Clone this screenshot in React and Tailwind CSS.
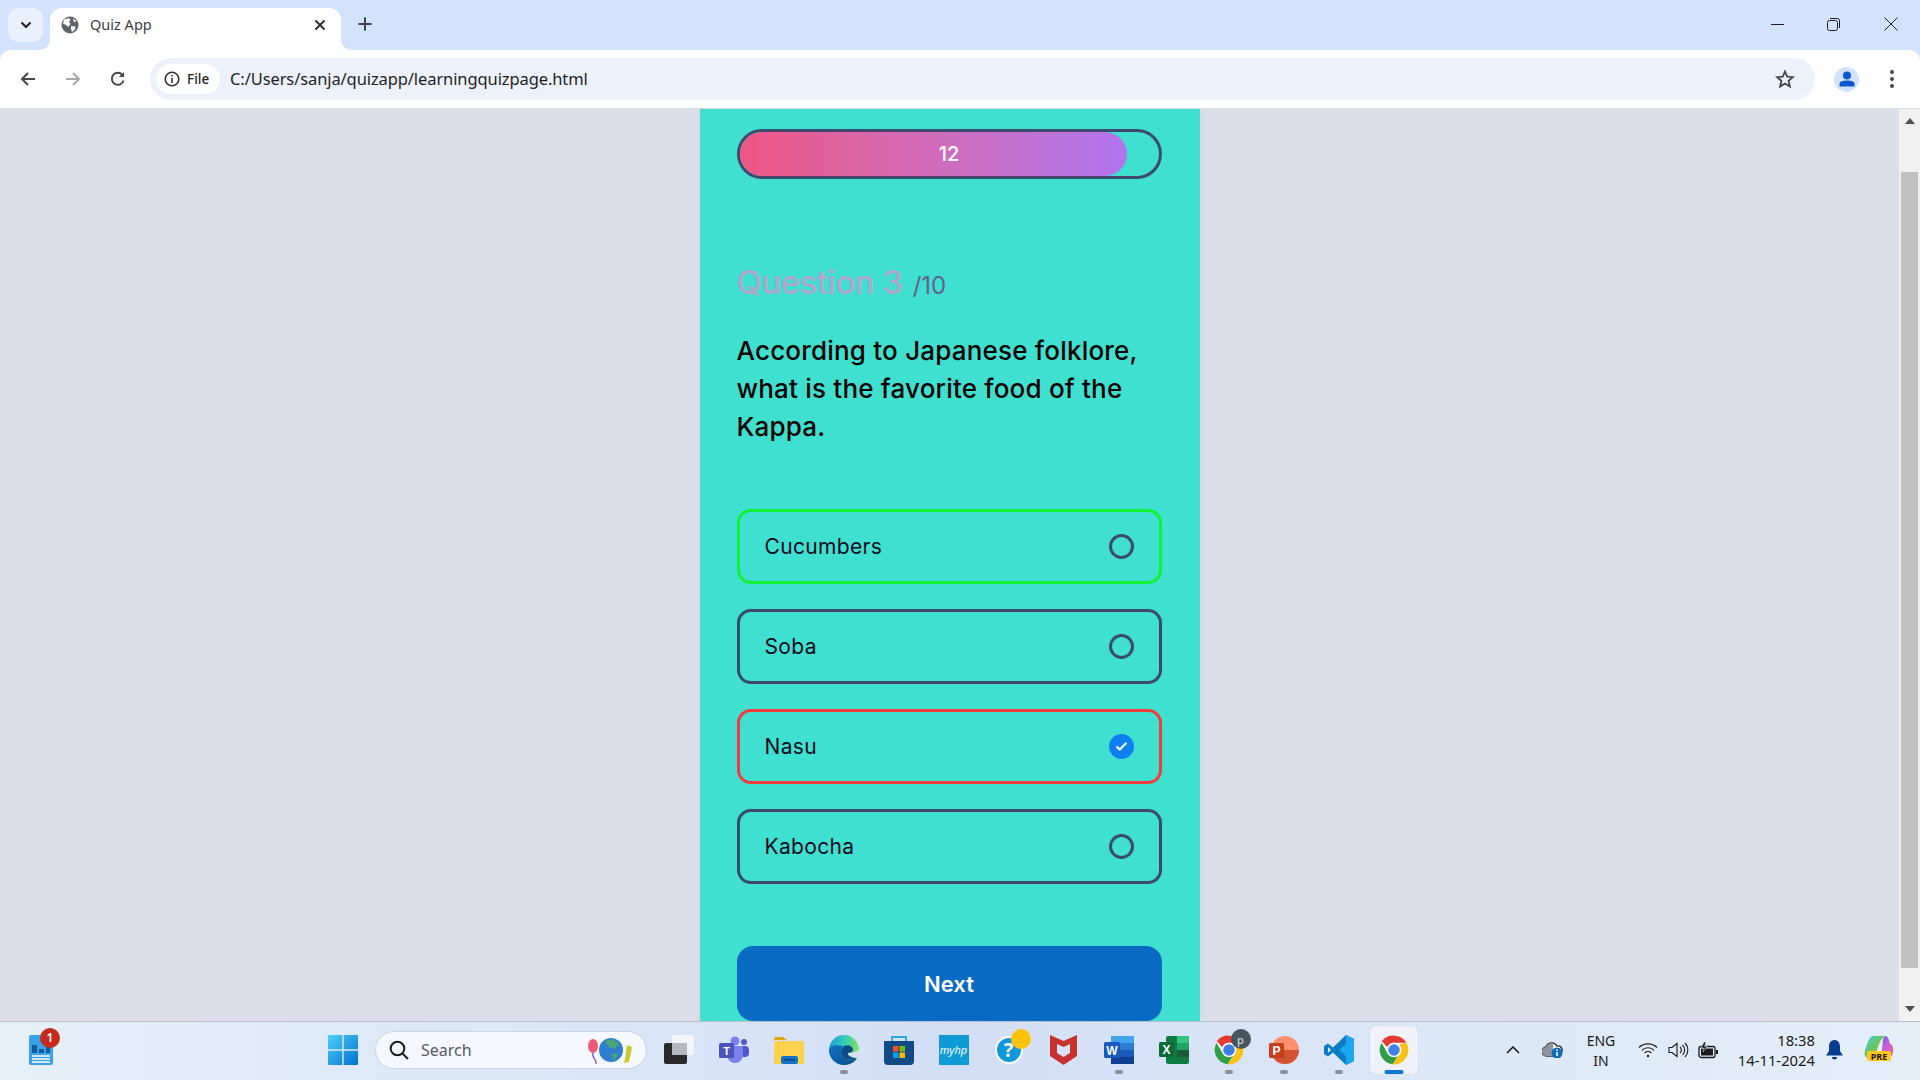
import React from "react";

const ui = "font-['Noto_Sans','Open_Sans',sans-serif]";
const quiz = "font-['Inter','Lato',sans-serif]";

function Globe() {
  return (
    <svg width="18" height="18" viewBox="0 0 18 18">
      <circle cx="9" cy="9" r="8.5" fill="#5f6368" />
      <path d="M3 3.5 L8 2 L9.5 4 L8 6 L9.5 8 L7 11 L5 9 L2 7.5Z M10 10 L14.5 10.5 L14 13.5 L11 16 L10 13Z M12 2.5 L15.5 5 L13 6.5Z" fill="#fff" />
    </svg>
  );
}

function ChromeLogo({ size = 30 }) {
  return (
    <svg width={size} height={size} viewBox="0 0 48 48">
      <circle cx="24" cy="24" r="23" fill="#fff" />
      <path d="M24 1a23 23 0 0 1 19.9 11.5H24a11.5 11.5 0 0 0-10.7 7.2L4.6 9.8A23 23 0 0 1 24 1z" fill="#e33b2e" />
      <path d="M4.1 12.4 A23 23 0 0 0 22 46.9 L31 32.5 A11.5 11.5 0 0 1 14 30 Z" fill="#2f9e47" />
      <path d="M43.9 12.5 A23 23 0 0 1 22 46.9 L32.5 31 A11.5 11.5 0 0 0 32 15 L43.9 12.5Z" fill="#fbc116" />
      <circle cx="24" cy="24" r="11.5" fill="#fff" />
      <circle cx="24" cy="24" r="9.2" fill="#3f7fe8" />
    </svg>
  );
}

function Dot() {
  return <span className="absolute left-1/2 top-[48px] h-[4px] w-[8px] -translate-x-1/2 rounded-full bg-[#8a8f9c]" />;
}

function TaskIcon({ children, dot, active }) {
  return (
    <div className="relative flex h-[56px] w-[55px] items-center justify-center">
      {active && <span className="absolute left-[3.5px] top-[4px] h-[48px] w-[48px] rounded-[5px] bg-[#eff2fa] shadow-[0_0_1px_rgba(0,0,0,0.25)]" />}
      <span className="relative flex items-center justify-center">{children}</span>
      {dot && <Dot />}
      {active && <span className="absolute left-1/2 top-[48px] h-[4px] w-[19px] -translate-x-1/2 rounded-full bg-[#0078d4]" />}
    </div>
  );
}

function Radio({ checked }) {
  if (checked) {
    return (
      <span className="flex h-[25px] w-[25px] items-center justify-center rounded-full bg-[#0d7ff0]">
        <svg width="13" height="11" viewBox="0 0 13 11" fill="none" stroke="#fff" strokeWidth="2.2">
          <path d="M1.5 5.5 L4.8 8.5 L11.5 1.8" />
        </svg>
      </span>
    );
  }
  return <span className="h-[25px] w-[25px] rounded-full border-[3px] border-[#3c4a6d]" />;
}

function Option({ label, border, checked }) {
  return (
    <div className={`flex h-[75px] items-center justify-between rounded-[14px] border-[3px] px-[25px] ${border}`}>
      <span className="text-[21px] leading-[30px] tracking-[0.35px] text-[#050a20]">{label}</span>
      <Radio checked={checked} />
    </div>
  );
}

function Chrome() {
  return (
    <div className={`${ui} shrink-0 bg-[#d3e3fd]`}>
      <div className="flex h-[50px] items-end">
        <div className="mb-[8px] ml-[8px] flex h-[34px] w-[35px] items-center justify-center rounded-[10px] bg-[#e9f1fe]">
          <svg width="12" height="8" viewBox="0 0 12 8" fill="none" stroke="#1f1f1f" strokeWidth="2"><path d="M1.5 1.5 L6 6 L10.5 1.5" /></svg>
        </div>
        <div className="relative ml-[7px] flex h-[42px] w-[291px] items-center rounded-t-[12px] bg-white pb-[8px] pl-[11px] pr-[15px]">
          <Globe />
          <span className="ml-[11px] flex-1 text-[14.5px] text-[#3c4043]">Quiz App</span>
          <svg width="12" height="12" viewBox="0 0 12 12" stroke="#303134" strokeWidth="2"><path d="M1.5 1.5 L10.5 10.5 M10.5 1.5 L1.5 10.5" /></svg>
          <svg className="absolute -left-[10px] bottom-0" width="10" height="10" viewBox="0 0 10 10"><path d="M10 0 V10 H0 A10 10 0 0 0 10 0Z" fill="#fff" /></svg>
          <svg className="absolute -right-[10px] bottom-0" width="10" height="10" viewBox="0 0 10 10"><path d="M0 0 V10 H10 A10 10 0 0 1 0 0Z" fill="#fff" /></svg>
        </div>
        <svg className="mb-[19px] ml-[17px]" width="14" height="14" viewBox="0 0 14 14" stroke="#3c4043" strokeWidth="2"><path d="M7 0.5 V13.5 M0.5 7 H13.5" /></svg>
        <div className="flex-1" />
        <div className="mb-[19px] flex items-center">
          <span className="block h-px w-[13px] bg-[#1f1f1f]" />
          <svg className="ml-[43px]" width="13" height="13" viewBox="0 0 13 13" fill="none" stroke="#1f1f1f" strokeWidth="1">
            <rect x="0.5" y="2.5" width="10" height="10" rx="2" />
            <path d="M3 0.5 H10.5 A2 2 0 0 1 12.5 2.5 V10" />
          </svg>
          <svg className="ml-[44px] mr-[22px]" width="14" height="14" viewBox="0 0 14 14" stroke="#1f1f1f" strokeWidth="1"><path d="M0.5 0.5 L13.5 13.5 M13.5 0.5 L0.5 13.5" /></svg>
        </div>
      </div>
      <div className="flex h-[59px] items-center rounded-t-[10px] border-b border-[#dadce0] bg-white">
        <svg className="ml-[20px]" width="16" height="16" viewBox="0 0 16 16" fill="none" stroke="#474747" strokeWidth="2"><path d="M15 8 H2 M8 2 L2 8 L8 14" /></svg>
        <svg className="ml-[29px]" width="16" height="16" viewBox="0 0 16 16" fill="none" stroke="#a8a8a8" strokeWidth="2"><path d="M1 8 H14 M8 2 L14 8 L8 14" /></svg>
        <svg className="ml-[29px]" width="16" height="16" viewBox="0 0 16 16" fill="none" stroke="#474747" strokeWidth="2">
          <path d="M13.6 9.5 A6 6 0 1 1 12.3 3.8" />
          <path d="M14 1 V6 H9" fill="#474747" stroke="none" />
        </svg>
        <div className="ml-[24px] flex h-[42px] w-[1665px] items-center rounded-full bg-[#ecf1fa] pl-[6px] pr-[20px]">
          <div className="flex h-[30px] w-[64px] items-center rounded-full bg-white pl-[8px]">
            <svg width="16" height="16" viewBox="0 0 16 16" fill="none" stroke="#303134" strokeWidth="1.6">
              <circle cx="8" cy="8" r="6.8" />
              <path d="M8 7 V12 M8 4 V5.6" />
            </svg>
            <span className="ml-[7px] text-[13.5px] font-medium text-[#1f1f1f]">File</span>
          </div>
          <span className="ml-[10px] flex-1 text-[16.5px] tracking-[-0.1px] text-[#1f1f1f]">C:/Users/sanja/quizapp/learningquizpage.html</span>
          <svg width="20" height="20" viewBox="0 0 24 24" fill="none" stroke="#474747" strokeWidth="2.2" strokeLinejoin="miter">
            <path d="M12 3 L14.6 9.2 L21.5 9.8 L16.3 14.3 L17.9 21 L12 17.5 L6.1 21 L7.7 14.3 L2.5 9.8 L9.4 9.2Z" />
          </svg>
        </div>
        <div className="ml-[19px] flex h-[25px] w-[25px] items-center justify-center rounded-full bg-[#d3e3fd]">
          <svg width="16" height="16" viewBox="0 0 16 16" fill="#0b57d0">
            <circle cx="8" cy="4.5" r="4" />
            <path d="M0.5 15.5 V13 C0.5 10.5 4 9.6 8 9.6 S15.5 10.5 15.5 13 V15.5Z" />
          </svg>
        </div>
        <div className="ml-[31px] flex flex-col gap-[3px]">
          <span className="h-[4px] w-[4px] rounded-full bg-[#474747]" />
          <span className="h-[4px] w-[4px] rounded-full bg-[#474747]" />
          <span className="h-[4px] w-[4px] rounded-full bg-[#474747]" />
        </div>
      </div>
    </div>
  );
}

function Card() {
  return (
    <div className={`${quiz} h-full w-[500px] bg-[#40e0d0] pl-[37px] pr-[38px] pt-[20px] shadow-[0_0_6px_rgba(0,0,0,0.06)]`}>
      <div className="relative h-[50px] rounded-full border-[3px] border-[#3c4a6d]">
        <div className="flex h-full w-[387px] items-center rounded-full bg-gradient-to-r from-[#ee5583] to-[#b075ee]" />
        <span className="absolute inset-0 flex items-center justify-center text-[20px] font-medium text-white">12</span>
      </div>
      <div className="mt-[79px] flex h-[48px] items-baseline">
        <span className="text-[33px] font-medium leading-[48px] tracking-[-0.5px] text-[#b0a6c9]">Question 3</span>
        <span className="ml-[10px] text-[24px] text-[#63608c]">/10</span>
      </div>
      <p className="mt-[26px] text-[26px] font-medium leading-[38px] tracking-[0.2px] text-black">
        According to Japanese folklore, what is the favorite food of the Kappa.
      </p>
      <div className="mt-[63px] flex flex-col gap-[25px]">
        <Option label="Cucumbers" border="border-[#0ff132]" />
        <Option label="Soba" border="border-[#3c4a6d]" />
        <Option label="Nasu" border="border-[#f53a3f]" checked />
        <Option label="Kabocha" border="border-[#3c4a6d]" />
      </div>
      <div className="mt-[62px] flex h-[75px] items-center justify-center rounded-[16px] bg-[#0a6bc4] pt-[2px] text-[22px] font-semibold text-white">
        Next
      </div>
    </div>
  );
}

function Scrollbar() {
  return (
    <div className="flex w-[21px] shrink-0 flex-col items-center bg-[#f1f1f1]">
      <svg className="mt-[9px]" width="10" height="6" viewBox="0 0 10 6" fill="#505050"><path d="M0 6 L5 0 L10 6Z" /></svg>
      <div className="mt-[48px] h-[796px] w-[17px] bg-[#c1c1c1]" />
      <svg className="mt-[38px]" width="10" height="6" viewBox="0 0 10 6" fill="#505050"><path d="M0 0 L5 6 L10 0Z" /></svg>
    </div>
  );
}

function Taskbar() {
  return (
    <div className={`${ui} flex h-[59px] shrink-0 items-center border-t border-[#b9c0cc] bg-gradient-to-r from-[#e6f0f8] via-[#d3dff7] to-[#e5eff8] pb-[2px]`}>
      <div className="relative flex w-[82px] justify-center">
        <svg width="24" height="30" viewBox="0 0 24 30">
          <rect width="24" height="30" rx="2" fill="#3aa0ea" />
          <rect x="3" y="10" width="5" height="8" fill="#125a9c" />
          <rect x="10" y="14" width="5" height="4" fill="#125a9c" />
          <rect x="17" y="12" width="4" height="6" fill="#125a9c" />
          <path d="M3 21 H21 M3 24 H21 M3 27 H21" stroke="#fff" strokeWidth="1.5" />
        </svg>
        <span className="absolute left-[40px] top-[-7px] flex h-[20px] w-[20px] items-center justify-center rounded-full bg-[#c42b1c] text-[12px] font-semibold leading-none text-white">1</span>
      </div>
      <div className="w-[233px]" />
      <div className="flex w-[55px] justify-center">
        <svg width="30" height="30" viewBox="0 0 30 30">
          <defs>
            <linearGradient id="win" x1="0" y1="0" x2="1" y2="1">
              <stop offset="0" stopColor="#4fd0fb" />
              <stop offset="1" stopColor="#0070cf" />
            </linearGradient>
          </defs>
          <path d="M0 1 A1 1 0 0 1 1 0 H14.3 V14.3 H0Z M15.7 0 H29 A1 1 0 0 1 30 1 V14.3 H15.7Z M0 15.7 H14.3 V30 H1 A1 1 0 0 1 0 29Z M15.7 15.7 H30 V29 A1 1 0 0 1 29 30 H15.7Z" fill="url(#win)" />
        </svg>
      </div>
      <div className="ml-[5px] flex h-[38px] w-[272px] items-center rounded-full border border-[#ccd3e3] bg-[#f5f8fe] pl-[13px] pr-[13px]">
        <svg width="20" height="20" viewBox="0 0 20 20" fill="none" stroke="#1b1b1b" strokeWidth="2"><circle cx="8.5" cy="8.5" r="6.8" /><path d="M13.5 13.5 L19 19" /></svg>
        <span className="ml-[12px] flex-1 text-[16px] text-[#555a63]">Search</span>
        <svg width="46" height="30" viewBox="0 0 46 30">
          <ellipse cx="6" cy="11" rx="5" ry="7" fill="#ef5a78" />
          <path d="M6 18 C4 22 10 24 9 29" stroke="#6a5ac8" strokeWidth="1.2" fill="none" />
          <circle cx="24" cy="15" r="12" fill="#2f7fd0" />
          <path d="M18 6 L26 4 L32 9 L28 14 L22 12Z M24 18 L31 19 L27 26Z" fill="#4aa678" />
          <path d="M38 24 L40 10 L45 12 L42 27 L37 28Z" fill="#c9c92d" />
        </svg>
      </div>
      <div className="ml-[4px] flex">
        <TaskIcon>
          <svg width="30" height="30" viewBox="0 0 30 30">
            <rect x="0" y="8" width="23" height="21" rx="2" fill="#2a2a2a" />
            <rect x="8" y="0" width="22" height="20" rx="2" fill="#f5f6f9" fillOpacity="0.9" />
            <rect x="8" y="8" width="15" height="12" fill="#b5b8bd" />
          </svg>
        </TaskIcon>
        <TaskIcon>
          <svg width="30" height="28" viewBox="0 0 30 28">
            <circle cx="25" cy="6" r="3" fill="#5059c9" />
            <rect x="21" y="10" width="9" height="11" rx="4" fill="#5059c9" />
            <circle cx="16" cy="5" r="4.5" fill="#7b83eb" />
            <path d="M8 10 H24 V19 A8 8 0 0 1 8 19Z" fill="#7b83eb" />
            <rect x="0" y="7" width="15" height="15" rx="1.5" fill="#4b53bc" />
            <text x="7.5" y="19" textAnchor="middle" fontSize="11" fontWeight="700" fill="#fff" fontFamily="Liberation Sans">T</text>
          </svg>
        </TaskIcon>
        <TaskIcon dot={false}>
          <svg width="30" height="27" viewBox="0 0 30 27">
            <path d="M0 2 A2 2 0 0 1 2 0 H9 L13 3 H0Z" fill="#e0a800" />
            <path d="M0 4 H30 V27 H0Z" fill="#ffd24d" />
            <rect x="7" y="19" width="17" height="8" rx="2" fill="#1273c9" />
            <rect x="10" y="22" width="11" height="1.5" fill="#0a3f78" />
          </svg>
        </TaskIcon>
        <TaskIcon dot>
          <svg width="30" height="30" viewBox="0 0 30 30">
            <defs>
              <linearGradient id="edge" x1="0" y1="0.3" x2="1" y2="0.5">
                <stop offset="0" stopColor="#1f9ad8" />
                <stop offset="0.45" stopColor="#30cdb8" />
                <stop offset="1" stopColor="#84e060" />
              </linearGradient>
              <linearGradient id="edge2" x1="0" y1="0" x2="1" y2="1">
                <stop offset="0" stopColor="#0f72c4" />
                <stop offset="1" stopColor="#0c4a8c" />
              </linearGradient>
            </defs>
            <circle cx="15" cy="15" r="15" fill="url(#edge)" />
            <path d="M0 15 C0 22 6 30 15 30 C21 30 26 27 28 23 C23 25 18 25 15 23 C11 20 11 14 14 11 C9 10 2 9 0 15Z" fill="url(#edge2)" />
            <path d="M15 23 C11 20 11 14 15 11 C19 9 24 11 24 15 C24 17 22 18 19 18 C18 20 23 23 28 23 C23 25 18 25 15 23Z" fill="#114b86" />
            <path d="M19 18 C23 18 26 17 30 15 C30 18 29 21 28 23 C23 23 18 20 19 18Z" fill="#d5e0f7" />
          </svg>
        </TaskIcon>
        <TaskIcon>
          <svg width="30" height="30" viewBox="0 0 30 30">
            <path d="M8 6 V2 H22 V6" fill="none" stroke="#29a8e0" strokeWidth="1.8" />
            <path d="M0 6 H30 V26 A4 4 0 0 1 26 30 H4 A4 4 0 0 1 0 26Z" fill="#124a85" />
            <rect x="9" y="11" width="5.5" height="5.5" fill="#f25022" />
            <rect x="15.5" y="11" width="5.5" height="5.5" fill="#7fba00" />
            <rect x="9" y="17.5" width="5.5" height="5.5" fill="#00a4ef" />
            <rect x="15.5" y="17.5" width="5.5" height="5.5" fill="#ffb900" />
          </svg>
        </TaskIcon>
        <TaskIcon>
          <span className="flex h-[30px] w-[30px] items-center justify-center bg-[#109ad6] text-[11px] italic text-white">my<b className="font-normal">hp</b></span>
        </TaskIcon>
        <TaskIcon>
          <span className="relative flex h-[28px] w-[28px] items-center justify-center rounded-full border-2 border-white bg-[#0e9ad8] text-[20px] font-bold leading-none text-white">?</span>
          <span className="absolute left-[16px] top-[-7px] h-[20px] w-[20px] rounded-full bg-[#ffc20e]" />
        </TaskIcon>
        <TaskIcon>
          <svg width="27" height="30" viewBox="0 0 27 30">
            <path d="M0 0 L13.5 6 L27 0 V21 L13.5 30 L0 21Z" fill="#c8322d" />
            <path d="M7 9 L13.5 12 L20 9 V18 L13.5 22 L7 18Z" fill="#d8e2f6" />
          </svg>
        </TaskIcon>
        <TaskIcon dot>
          <svg width="30" height="30" viewBox="0 0 30 30">
            <rect x="7" y="1" width="23" height="28" rx="2" fill="#2b7cd3" />
            <rect x="7" y="1" width="23" height="7" fill="#41a5ee" />
            <rect x="7" y="15" width="23" height="7" fill="#185abd" />
            <rect x="7" y="22" width="23" height="7" fill="#103f91" />
            <rect x="0" y="7" width="16" height="16" rx="1.5" fill="#185abd" />
            <text x="8" y="19.5" textAnchor="middle" fontSize="12" fontWeight="700" fill="#fff" fontFamily="Liberation Sans">W</text>
          </svg>
        </TaskIcon>
        <TaskIcon>
          <svg width="30" height="28" viewBox="0 0 30 28">
            <rect x="7" y="0" width="23" height="28" rx="2" fill="#107c41" />
            <rect x="18" y="0" width="12" height="7" fill="#33c481" />
            <rect x="18" y="7" width="12" height="7" fill="#21a366" />
            <rect x="18" y="14" width="12" height="7" fill="#185c37" />
            <rect x="0" y="6" width="15" height="15" rx="1.5" fill="#0e6b38" />
            <text x="7.5" y="18" textAnchor="middle" fontSize="12" fontWeight="700" fill="#fff" fontFamily="Liberation Sans">X</text>
          </svg>
        </TaskIcon>
        <TaskIcon dot>
          <ChromeLogo />
          <span className="absolute left-[17px] top-[-6px] flex h-[20px] w-[20px] items-center justify-center rounded-full bg-[#48555f] text-[11px] font-medium leading-none text-[#c9d0d6]">p</span>
        </TaskIcon>
        <TaskIcon dot>
          <svg width="30" height="30" viewBox="0 0 30 30">
            <circle cx="16" cy="15" r="14" fill="#ff8f6b" />
            <path d="M16 15 H30 A14 14 0 0 1 2 15Z" fill="#d35230" />
            <rect x="0" y="8" width="15" height="15" rx="1.5" fill="#c43e1c" />
            <text x="7.5" y="20" textAnchor="middle" fontSize="12" fontWeight="700" fill="#fff" fontFamily="Liberation Sans">P</text>
          </svg>
        </TaskIcon>
        <TaskIcon dot>
          <svg width="30" height="30" viewBox="0 0 30 30">
            <path d="M22 0 L30 4 V26 L22 30 L9 17.5 L4 21.5 L0 19 V11 L4 8.5 L9 12.5Z" fill="#0a7cc4" />
            <path d="M22 0 L30 4 V26 L22 30 V21 L15 15 L22 9Z" fill="#1ea7ee" />
            <path d="M4 12 V18 L7 15Z" fill="#d8e2f6" />
          </svg>
        </TaskIcon>
        <TaskIcon active>
          <ChromeLogo />
        </TaskIcon>
      </div>
      <div className="ml-[79px] flex w-[26px] justify-center">
        <svg width="14" height="8" viewBox="0 0 14 8" fill="none" stroke="#1b1b1b" strokeWidth="1.6"><path d="M1 7 L7 1 L13 7" /></svg>
      </div>
      <div className="ml-[12px] flex w-[30px] justify-center">
        <svg width="22" height="16" viewBox="0 0 22 16">
          <path d="M5 14 A4.5 4.5 0 0 1 4 5 A6 6 0 0 1 15 4 A4 4 0 0 1 17 12 L16 14Z" fill="#fff" stroke="#333" strokeWidth="1.4" />
          <path d="M5 14 A4.5 4.5 0 0 1 4 5 A6 6 0 0 1 11 2 V14Z" fill="#8f959e" />
          <circle cx="15" cy="11" r="5.5" fill="#0f6cbd" />
          <path d="M15 10 V14 M15 7.6 V9" stroke="#fff" strokeWidth="1.6" />
        </svg>
      </div>
      <div className="ml-[13px] flex w-[40px] flex-col items-center pt-[2px] text-[14px] leading-[20px] text-[#1b1b1b]">
        <span>ENG</span>
        <span>IN</span>
      </div>
      <div className="ml-[15px] flex w-[24px] justify-center">
        <svg width="20" height="16" viewBox="0 0 20 16" fill="none" stroke="#1b1b1b" strokeWidth="1.1">
          <path d="M1 5.5 A13 13 0 0 1 19 5.5 M3.8 8.3 A9 9 0 0 1 16.2 8.3 M6.6 11 A5 5 0 0 1 13.4 11" />
          <circle cx="10" cy="14" r="1.2" fill="#1b1b1b" stroke="none" />
        </svg>
      </div>
      <div className="ml-[6px] flex w-[24px] justify-center">
        <svg width="21" height="16" viewBox="0 0 21 16" fill="none" stroke="#1b1b1b" strokeWidth="1.1">
          <path d="M1 5.5 H4 L9 1.5 V14.5 L4 10.5 H1Z" />
          <path d="M12 5 A4 4 0 0 1 12 11 M14.5 3 A7 7 0 0 1 14.5 13 M17 1 A10 10 0 0 1 17 15" />
        </svg>
      </div>
      <div className="ml-[6px] flex w-[24px] justify-center">
        <svg width="20" height="17" viewBox="0 0 20 17">
          <rect x="1" y="4.5" width="16" height="11" rx="2" fill="none" stroke="#1b1b1b" strokeWidth="1.3" />
          <rect x="3" y="6.5" width="12" height="7" fill="#1b1b1b" />
          <rect x="18" y="8" width="2" height="4" fill="#1b1b1b" />
          <path d="M6 0 L3 6 H6 L5 10 L9 4.5 H6.5 L8 0Z" fill="#1b1b1b" stroke="#e5eef8" strokeWidth="0.5" />
        </svg>
      </div>
      <div className="ml-[15px] flex w-[80px] flex-col items-end text-[14.8px] leading-[20px] whitespace-nowrap text-[#1b1b1b]">
        <span>18:38</span>
        <span>14-11-2024</span>
      </div>
      <div className="ml-[7px] flex w-[24px] justify-center">
        <svg width="17" height="20" viewBox="0 0 17 20" fill="#0a3d91">
          <path d="M8.5 0 C13 0 14 4 14 7 V11 L17 15.5 H0 L3 11 V7 C3 4 4 0 8.5 0Z" />
          <path d="M6 17 H11 A2.5 2.5 0 0 1 6 17Z" />
        </svg>
      </div>
      <div className="relative ml-[13px] flex w-[40px] justify-center">
        <svg width="30" height="28" viewBox="0 0 30 28">
          <defs>
            <linearGradient id="cop" x1="0" y1="0" x2="1" y2="1">
              <stop offset="0" stopColor="#3bd0e0" />
              <stop offset="0.5" stopColor="#6ac45a" />
              <stop offset="1" stopColor="#f0c030" />
            </linearGradient>
            <linearGradient id="cop2" x1="0" y1="0" x2="1" y2="1">
              <stop offset="0" stopColor="#2a6fe0" />
              <stop offset="0.5" stopColor="#c85ae0" />
              <stop offset="1" stopColor="#f06a80" />
            </linearGradient>
          </defs>
          <path d="M10 0 H21 C17 2 15 8 13 14 C12 19 10 22 5 22 C1 22 0 19 1 15 C3 8 5 0 10 0Z" fill="url(#cop)" />
          <path d="M21 0 C24 0 25 3 26 8 C28 8 30 11 29 16 C28 21 25 24 20 24 H12 C16 23 17 19 18 14 C19 9 18 2 21 0Z" fill="url(#cop2)" />
        </svg>
        <span className="absolute left-[8px] top-[15px] flex h-[10px] w-[24px] items-center justify-center rounded-[2px] bg-[#ffc71a] text-[9px] font-bold leading-none text-[#1b1b1b]">PRE</span>
      </div>
    </div>
  );
}

export default function App() {
  return (
    <div className="flex h-screen w-full flex-col overflow-hidden bg-[#dcdfea]">
      <Chrome />
      <div className="flex min-h-0 flex-1">
        <main className="flex min-w-0 flex-1 justify-center overflow-hidden">
          <Card />
        </main>
        <Scrollbar />
      </div>
      <Taskbar />
    </div>
  );
}
